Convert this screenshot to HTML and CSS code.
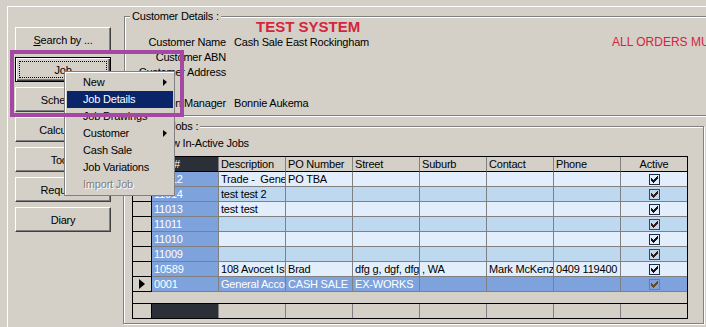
FILE: index.html
```html
<!DOCTYPE html>
<html lang="en">
<head>
    <meta charset="UTF-8">
    <title>Customer Jobs</title>
    <link rel="stylesheet" href="styles.css">
</head>
<body>
    <div class="frame">
        <div class="sidebar">
            <button class="btn"><u>S</u>earch by ...</button>
            <button class="btn btn-default"><span class="focus">Job</span></button>
            <button class="btn">Schedule</button>
            <button class="btn">Calculator</button>
            <button class="btn">Tools</button>
            <button class="btn">Requests</button>
            <button class="btn">Diary</button>
        </div>

        <div class="main">
            <div class="group customer">
                <div class="caption">Customer Details :</div>
                <div class="test-title">TEST SYSTEM</div>
                <div class="details">
                    <div class="label">Customer Name</div>
                    <div class="value">Cash Sale East Rockingham</div>
                    <div class="warning">ALL ORDERS MUST BE PAID IN FULL BEFORE DISPATCH</div>
                    <div class="label">Customer ABN</div>
                    <div class="value"></div>
                    <div></div>
                    <div class="label">Customer Address</div>
                    <div class="value"></div>
                    <div></div>
                    <div class="label">Region Manager</div>
                    <div class="value">Bonnie Aukema</div>
                    <div></div>
                </div>
            </div>

            <div class="group jobs">
                <div class="caption">Current Jobs :</div>
                <label class="show-inactive"><span class="check-box"></span>Show In-Active Jobs</label>

                <div class="grid">
                    <div class="row head">
                        <div class="cell ind"></div>
                        <div class="cell id">Job #</div>
                        <div class="cell">Description</div>
                        <div class="cell">PO Number</div>
                        <div class="cell">Street</div>
                        <div class="cell">Suburb</div>
                        <div class="cell">Contact</div>
                        <div class="cell">Phone</div>
                        <div class="cell act">Active</div>
                    </div>
                    <div class="row odd">
                        <div class="cell ind"></div>
                        <div class="cell id">11012</div>
                        <div class="cell">Trade -  General Account</div>
                        <div class="cell">PO TBA</div>
                        <div class="cell"></div>
                        <div class="cell"></div>
                        <div class="cell"></div>
                        <div class="cell"></div>
                        <div class="cell act"><span class="tick navy"><svg width="7" height="7" viewBox="0 0 7 7"><path d="M6 0h1v1h-1zM5 1h2v1h-2zM0 2h1v1h-1zM4 2h3v1h-3zM0 3h2v1h-2zM3 3h3v1h-3zM0 4h5v1h-5zM1 5h3v1h-3zM2 6h1v1h-1z"/></svg></span></div>
                    </div>
                    <div class="row even">
                        <div class="cell ind"></div>
                        <div class="cell id">11014</div>
                        <div class="cell">test test 2</div>
                        <div class="cell"></div>
                        <div class="cell"></div>
                        <div class="cell"></div>
                        <div class="cell"></div>
                        <div class="cell"></div>
                        <div class="cell act"><span class="tick red"><svg width="7" height="7" viewBox="0 0 7 7"><path d="M6 0h1v1h-1zM5 1h2v1h-2zM0 2h1v1h-1zM4 2h3v1h-3zM0 3h2v1h-2zM3 3h3v1h-3zM0 4h5v1h-5zM1 5h3v1h-3zM2 6h1v1h-1z"/></svg></span></div>
                    </div>
                    <div class="row odd">
                        <div class="cell ind"></div>
                        <div class="cell id">11013</div>
                        <div class="cell">test test</div>
                        <div class="cell"></div>
                        <div class="cell"></div>
                        <div class="cell"></div>
                        <div class="cell"></div>
                        <div class="cell"></div>
                        <div class="cell act"><span class="tick navy"><svg width="7" height="7" viewBox="0 0 7 7"><path d="M6 0h1v1h-1zM5 1h2v1h-2zM0 2h1v1h-1zM4 2h3v1h-3zM0 3h2v1h-2zM3 3h3v1h-3zM0 4h5v1h-5zM1 5h3v1h-3zM2 6h1v1h-1z"/></svg></span></div>
                    </div>
                    <div class="row even">
                        <div class="cell ind"></div>
                        <div class="cell id">11011</div>
                        <div class="cell"></div>
                        <div class="cell"></div>
                        <div class="cell"></div>
                        <div class="cell"></div>
                        <div class="cell"></div>
                        <div class="cell"></div>
                        <div class="cell act"><span class="tick red"><svg width="7" height="7" viewBox="0 0 7 7"><path d="M6 0h1v1h-1zM5 1h2v1h-2zM0 2h1v1h-1zM4 2h3v1h-3zM0 3h2v1h-2zM3 3h3v1h-3zM0 4h5v1h-5zM1 5h3v1h-3zM2 6h1v1h-1z"/></svg></span></div>
                    </div>
                    <div class="row odd">
                        <div class="cell ind"></div>
                        <div class="cell id">11010</div>
                        <div class="cell"></div>
                        <div class="cell"></div>
                        <div class="cell"></div>
                        <div class="cell"></div>
                        <div class="cell"></div>
                        <div class="cell"></div>
                        <div class="cell act"><span class="tick navy"><svg width="7" height="7" viewBox="0 0 7 7"><path d="M6 0h1v1h-1zM5 1h2v1h-2zM0 2h1v1h-1zM4 2h3v1h-3zM0 3h2v1h-2zM3 3h3v1h-3zM0 4h5v1h-5zM1 5h3v1h-3zM2 6h1v1h-1z"/></svg></span></div>
                    </div>
                    <div class="row even">
                        <div class="cell ind"></div>
                        <div class="cell id">11009</div>
                        <div class="cell"></div>
                        <div class="cell"></div>
                        <div class="cell"></div>
                        <div class="cell"></div>
                        <div class="cell"></div>
                        <div class="cell"></div>
                        <div class="cell act"><span class="tick red"><svg width="7" height="7" viewBox="0 0 7 7"><path d="M6 0h1v1h-1zM5 1h2v1h-2zM0 2h1v1h-1zM4 2h3v1h-3zM0 3h2v1h-2zM3 3h3v1h-3zM0 4h5v1h-5zM1 5h3v1h-3zM2 6h1v1h-1z"/></svg></span></div>
                    </div>
                    <div class="row odd">
                        <div class="cell ind"></div>
                        <div class="cell id">10589</div>
                        <div class="cell">108 Avocet Island Quay</div>
                        <div class="cell">Brad</div>
                        <div class="cell">dfg g, dgf, dfg</div>
                        <div class="cell">, WA</div>
                        <div class="cell">Mark McKenzie</div>
                        <div class="cell">0409 119400</div>
                        <div class="cell act"><span class="tick navy"><svg width="7" height="7" viewBox="0 0 7 7"><path d="M6 0h1v1h-1zM5 1h2v1h-2zM0 2h1v1h-1zM4 2h3v1h-3zM0 3h2v1h-2zM3 3h3v1h-3zM0 4h5v1h-5zM1 5h3v1h-3zM2 6h1v1h-1z"/></svg></span></div>
                    </div>
                    <div class="row selected">
                        <div class="cell ind"><span class="pointer"></span></div>
                        <div class="cell id">0001</div>
                        <div class="cell">General Account</div>
                        <div class="cell">CASH SALE</div>
                        <div class="cell">EX-WORKS</div>
                        <div class="cell"></div>
                        <div class="cell"></div>
                        <div class="cell"></div>
                        <div class="cell act"><span class="tick orange"><svg width="7" height="7" viewBox="0 0 7 7"><path d="M6 0h1v1h-1zM5 1h2v1h-2zM0 2h1v1h-1zM4 2h3v1h-3zM0 3h2v1h-2zM3 3h3v1h-3zM0 4h5v1h-5zM1 5h3v1h-3zM2 6h1v1h-1z"/></svg></span></div>
                    </div>
                    <div class="gap"></div>
                    <div class="row foot">
                        <div class="cell ind"></div>
                        <div class="cell id"></div>
                        <div class="cell"></div>
                        <div class="cell"></div>
                        <div class="cell"></div>
                        <div class="cell"></div>
                        <div class="cell"></div>
                        <div class="cell"></div>
                        <div class="cell act"></div>
                    </div>
                </div>
            </div>
        </div>
    </div>

    <!-- popup menu of the Job button -->
    <div class="menu">
        <div class="item">New<span class="arrow"></span></div>
        <div class="item selected">Job Details</div>
        <div class="item">Job Drawings</div>
        <div class="item">Customer<span class="arrow"></span></div>
        <div class="item">Cash Sale</div>
        <div class="item">Job Variations</div>
        <div class="item disabled">Import Job</div>
    </div>

    <div class="mark-box"></div>
</body>
</html>
```

FILE: styles.css
```css
body {
    margin: 0;
    height: 327px;
    overflow: hidden;
    background: #d4d0c8;
    color: #000;
    font-family: "Liberation Sans", Arial, sans-serif;
    font-size: 11px;
    letter-spacing: -0.2px;
}
.frame {
    display: flex;
    height: 321px;
    margin: 6px 0 0 7px;
    border-top: 1px solid #fff;
    border-left: 1px solid #fff;
    box-sizing: border-box;
}

/* left buttons */
.sidebar {
    flex: none;
    width: 115px;
    padding: 20px 0 0 7px;
    box-sizing: border-box;
    display: flex;
    flex-direction: column;
    align-items: flex-start;
    gap: 5px;
}
.btn {
    width: 96px;
    height: 25px;
    padding: 0;
    box-sizing: border-box;
    font: inherit;
    letter-spacing: inherit;
    color: #000;
    background: #d4d0c8;
    border: 1px solid;
    border-color: #fff #404040 #404040 #fff;
    box-shadow: inset -1px -1px #808080;
}
.btn-default {
    padding: 3px;
    border-color: #000;
    box-shadow: inset 1px 1px #fff, inset -1px -1px #404040, inset -2px -2px #808080;
}
.focus {
    display: flex;
    align-items: center;
    justify-content: center;
    height: 100%;
    border: 1px dotted #000;
    box-sizing: border-box;
}

/* group boxes */
.main {
    flex: none;
    width: 640px;
    padding-top: 9px;
    display: flex;
    flex-direction: column;
}
.group {
    box-sizing: border-box;
    border: 1px solid #808080;
    box-shadow: inset 1px 1px #fff, 1px 1px #fff;
}
.customer {
    margin-left: 1px;
    width: 639px;
    height: 100px;
}
.jobs {
    margin-top: 10px;
    width: 581px;
    height: 198px;
}
.caption {
    width: max-content;
    height: 13px;
    line-height: 13px;
    margin: -7px 0 0 5px;
    padding: 0 2px;
    background: #d4d0c8;
}
.jobs .caption {
    margin-left: 6px;
}
.test-title {
    height: 8px;
    line-height: 8px;
    margin-left: 131px;
    font-size: 15px;
    font-weight: bold;
    letter-spacing: 0;
    color: #d4243e;
}
.details {
    display: grid;
    grid-template-columns: 109px 378px max-content;
    grid-template-rows: 15px 15px 31px 15px;
    margin-top: 4px;
    line-height: 15px;
    white-space: nowrap;
}
.label {
    text-align: right;
    padding-right: 8px;
}
.warning {
    font-size: 12px;
    letter-spacing: 0;
    color: #d4243e;
}

.show-inactive {
    display: flex;
    align-items: center;
    gap: 4px;
    height: 14px;
    margin: 3px 0 0 12px;
}
.check-box {
    width: 13px;
    height: 13px;
    box-sizing: border-box;
    background: #fff;
    border: 1px solid;
    border-color: #808080 #fff #fff #808080;
    box-shadow: inset 1px 1px #404040;
}

/* jobs grid */
.grid {
    width: 556px;
    margin: 6px 0 0 8px;
    box-sizing: border-box;
    border: 1px solid #000;
    background: #d4d0c8;
}
.row {
    display: flex;
}
.cell {
    flex: none;
    width: 67px;
    height: 15px;
    box-sizing: border-box;
    padding-left: 2px;
    border-right: 1px solid #808080;
    border-bottom: 1px solid #808080;
    line-height: 14px;
    white-space: pre;
    overflow: hidden;
}
.cell.ind {
    width: 19px;
    padding: 0;
    border-color: #000;
    display: flex;
    align-items: center;
    justify-content: center;
}
.cell.act {
    width: 66px;
    padding: 0;
    border-right: 0;
    display: flex;
    align-items: center;
    justify-content: center;
}
.head .cell {
    border-bottom-color: #000;
}
.odd .cell {
    background: #e3eefc;
}
.even .cell {
    background: #bed9ef;
}
.selected .cell,
.row .cell.id {
    background: #7ea2dc;
    color: #fff;
}
.row .cell.ind {
    background: #d4d0c8;
}
.head .cell.id,
.foot .cell.id {
    background: #2b2f38;
    color: #fff;
}
.gap {
    height: 11px;
}
.foot {
    border-top: 1px solid #000;
}
.foot .cell {
    height: 14px;
    border-bottom: 0;
}
.pointer {
    width: 0;
    height: 0;
    border-left: 6px solid #000;
    border-top: 5px solid transparent;
    border-bottom: 5px solid transparent;
}
.tick {
    display: flex;
    align-items: center;
    justify-content: center;
    width: 11px;
    height: 11px;
    box-sizing: border-box;
    border: 1px solid #1f2d4d;
}
.tick svg {
    shape-rendering: crispEdges;
    fill: #141414;
}
.tick.red {
    border-color: #8e2232;
}
.tick.red svg {
    fill: #3a1a12;
}
.tick.orange {
    border-color: #c8661e;
}
.tick.orange svg {
    fill: #6b4420;
}

/* popup menu */
.menu {
    position: absolute;
    left: 64px;
    top: 71px;
    width: 111px;
    box-sizing: border-box;
    padding: 2px 1px 2px 2px;
    background: #d4d0c8;
    border: 1px solid #808080;
    box-shadow: inset 1px 1px #fff;
}
.item {
    display: flex;
    align-items: center;
    justify-content: space-between;
    height: 17px;
    line-height: 17px;
    padding: 0 6px 0 16px;
}
.item.selected {
    background: #0a246a;
    color: #fff;
}
.item.disabled {
    color: #808080;
    text-shadow: 1px 1px 0 #fff;
}
.arrow {
    width: 0;
    height: 0;
    border-left: 4px solid #000;
    border-top: 3px solid transparent;
    border-bottom: 4px solid transparent;
}

.mark-box {
    position: absolute;
    left: 10px;
    top: 50px;
    width: 174px;
    height: 67px;
    box-sizing: border-box;
    border: 4px solid #a349a4;
}
```
